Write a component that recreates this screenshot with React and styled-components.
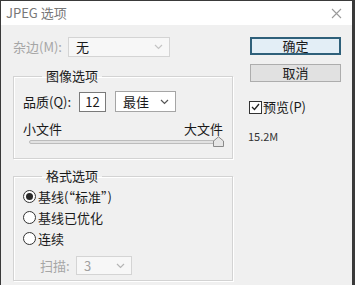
import React from 'react';
import styled, { createGlobalStyle } from 'styled-components';

const GlobalStyle = createGlobalStyle`
  html, body {
    margin: 0;
    padding: 0;
    background: #3a3a3a;
  }
  body {
    font-family: "Noto Sans CJK SC", "Liberation Sans", sans-serif;
    font-size: 13px;
    color: #1a1a1a;
  }
`;

const Dialog = styled.div`
    width: 351px;
    height: 284px;
    margin: 1px 0 0 1px;
    background: #f0f0f0;
    display: flex;
    flex-direction: column;
`;

const TitleBar = styled.div`
    height: 24px;
    background: #ffffff;
    display: flex;
    align-items: center;
    justify-content: space-between;
    padding: 0 10px 0 5px;
    color: #777;
    line-height: 16px;
`;

const Body = styled.div`
    display: flex;
    padding: 12px 0 0 12px;
`;

const LeftCol = styled.div`
    width: 220px;
    display: flex;
    flex-direction: column;
`;

const RightCol = styled.div`
    width: 91px;
    margin-left: 17px;
    display: flex;
    flex-direction: column;
`;

const Row = styled.div`
    display: flex;
    align-items: center;
    height: ${(p) => p.$h || 21}px;
    padding-left: ${(p) => p.$indent || 0}px;
    gap: ${(p) => p.$gap || 0}px;
`;

const Label = styled.span`
    width: ${(p) => (p.$w ? p.$w + 'px' : 'auto')};
    color: ${(p) => (p.$disabled ? '#a6a6a6' : '#1a1a1a')};
    line-height: 16px;
    white-space: nowrap;
`;

const SelectBox = styled.div`
    width: ${(p) => p.$w}px;
    height: ${(p) => p.$h}px;
    box-sizing: border-box;
    display: flex;
    align-items: center;
    justify-content: space-between;
    padding: 0 6px 0 7px;
    background: ${(p) => (p.$disabled ? '#f7f7f7' : '#ffffff')};
    border: 1px solid ${(p) => (p.$disabled ? '#d4d4d4' : '#a5a5a5')};
    color: ${(p) => (p.$muted ? '#a0a0a0' : '#1a1a1a')};
    line-height: 16px;
`;

const NumInput = styled.div`
    width: 27px;
    height: 20px;
    box-sizing: border-box;
    border: 1px solid #7a7a7a;
    background: #fff;
    display: flex;
    align-items: center;
    justify-content: center;
    line-height: 16px;
`;

const Group = styled.fieldset`
    margin: ${(p) => p.$mt}px 0 0 0;
    padding: ${(p) => p.$pad};
    border: 1px solid #d3d3d3;
    box-shadow: inset 1px 1px 0 #ffffff, 1px 1px 0 #ffffff;
    min-width: 0;
    box-sizing: border-box;
    width: 220px;
    height: ${(p) => p.$h}px;
`;

const Legend = styled.legend`
    margin-left: 19px;
    padding: 0 4px;
    line-height: 16px;
    font-size: 13px;
`;

const SliderLabels = styled.div`
    display: flex;
    justify-content: space-between;
    line-height: 14px;
    margin-top: 10px;
    padding-right: 0;
`;

const Track = styled.div`
    position: relative;
    height: 10px;
    margin: 1px 3px 0 6px;
`;

const Groove = styled.div`
    position: absolute;
    left: 0;
    right: 0;
    top: 3px;
    height: 4px;
    box-sizing: border-box;
    background: #e2e2e2;
    border: 1px solid #bcbcbc;
    border-radius: 2px;
`;

const Thumb = styled.svg`
    position: absolute;
    right: -4px;
    top: -1px;
`;

const RadioRow = styled.label`
    display: flex;
    align-items: center;
    height: 21px;
    gap: 2px;
    line-height: 16px;
`;

const Radio = styled.span`
    width: 13px;
    height: 13px;
    box-sizing: border-box;
    border-radius: 50%;
    border: 1px solid #333;
    background: #fff;
    display: flex;
    align-items: center;
    justify-content: center;

    &::after {
        content: '';
        width: 7px;
        height: 7px;
        border-radius: 50%;
        background: ${(p) => (p.$checked ? '#2a2a2a' : 'transparent')};
    }
`;

const Button = styled.div`
    height: 18px;
    box-sizing: border-box;
    display: flex;
    align-items: center;
    justify-content: center;
    line-height: 16px;
    margin-bottom: 9px;
    background: ${(p) => (p.$primary ? '#e3eef6' : '#e1e1e1')};
    border: ${(p) => (p.$primary ? '2px solid #2f607a' : '1px solid #adadad')};
`;

const CheckRow = styled.div`
    display: flex;
    align-items: center;
    gap: 1px;
    margin: 8px 0 0 -1px;
    line-height: 16px;
`;

const CheckBox = styled.span`
    width: 13px;
    height: 13px;
    box-sizing: border-box;
    border: 1px solid #333;
    background: #fff;
    display: flex;
    align-items: center;
    justify-content: center;
`;

const SizeText = styled.div`
    margin: 15px 0 0 -2px;
    font-size: 11px;
    line-height: 12px;
    color: #333;
`;

function Chevron({ color }) {
    return (
        <svg width="9" height="6" viewBox="0 0 9 6">
            <polyline
                points="1,1 4.5,4.5 8,1"
                fill="none"
                stroke={color}
                strokeWidth="1.2"
            />
        </svg>
    );
}

const radios = [
    { text: '基线(“标准”)', checked: true },
    { text: '基线已优化', checked: false },
    { text: '连续', checked: false },
];

export default function App() {
    return (
        <>
            <GlobalStyle />
            <Dialog>
                <TitleBar>
                    <span>JPEG 选项</span>
                    <svg width="11" height="11" viewBox="0 0 11 11">
                        <path
                            d="M1 1 L10 10 M10 1 L1 10"
                            stroke="#9a9a9a"
                            strokeWidth="1.1"
                        />
                    </svg>
                </TitleBar>
                <Body>
                    <LeftCol>
                        <Row $h={20}>
                            <Label $w={55} $disabled>
                                杂边(M):
                            </Label>
                            <SelectBox $w={102} $h={20} $disabled>
                                <span>无</span>
                                <Chevron color="#c4c4c4" />
                            </SelectBox>
                        </Row>

                        <Group $mt={11} $h={91} $pad="7px 9px 0 9px">
                            <Legend>图像选项</Legend>
                            <Row $h={21}>
                                <Label $w={56}>品质(Q):</Label>
                                <NumInput>12</NumInput>
                                <SelectBox
                                    $w={61}
                                    $h={21}
                                    style={{ marginLeft: 9 }}
                                >
                                    <span>最佳</span>
                                    <Chevron color="#555" />
                                </SelectBox>
                            </Row>
                            <SliderLabels>
                                <span>小文件</span>
                                <span>大文件</span>
                            </SliderLabels>
                            <Track>
                                <Groove />
                                <Thumb width="11" height="11" viewBox="0 0 11 11">
                                    <path
                                        d="M0.5 10.5 L0.5 5 L5.5 0.8 L10.5 5 L10.5 10.5 Z"
                                        fill="#e6e6e6"
                                        stroke="#8a8a8a"
                                    />
                                </Thumb>
                            </Track>
                        </Group>

                        <Group $mt={9} $h={113} $pad="2px 9px 0 9px">
                            <Legend>格式选项</Legend>
                            {radios.map((r, i) => (
                                <RadioRow key={i}>
                                    <Radio $checked={r.checked} />
                                    <span>{r.text}</span>
                                </RadioRow>
                            ))}
                            <Row $h={19} $indent={17} style={{ marginTop: 7 }}>
                                <Label $w={36} $disabled>
                                    扫描:
                                </Label>
                                <SelectBox $w={56} $h={19} $disabled $muted>
                                    <span>3</span>
                                    <Chevron color="#b5b5b5" />
                                </SelectBox>
                            </Row>
                        </Group>
                    </LeftCol>

                    <RightCol>
                        <Button $primary>确定</Button>
                        <Button>取消</Button>
                        <CheckRow>
                            <CheckBox>
                                <svg width="9" height="8" viewBox="0 0 9 8">
                                    <polyline
                                        points="1,4 3.5,6.5 8,1"
                                        fill="none"
                                        stroke="#222"
                                        strokeWidth="1.3"
                                    />
                                </svg>
                            </CheckBox>
                            <span>预览(P)</span>
                        </CheckRow>
                        <SizeText>15.2M</SizeText>
                    </RightCol>
                </Body>
            </Dialog>
        </>
    );
}
